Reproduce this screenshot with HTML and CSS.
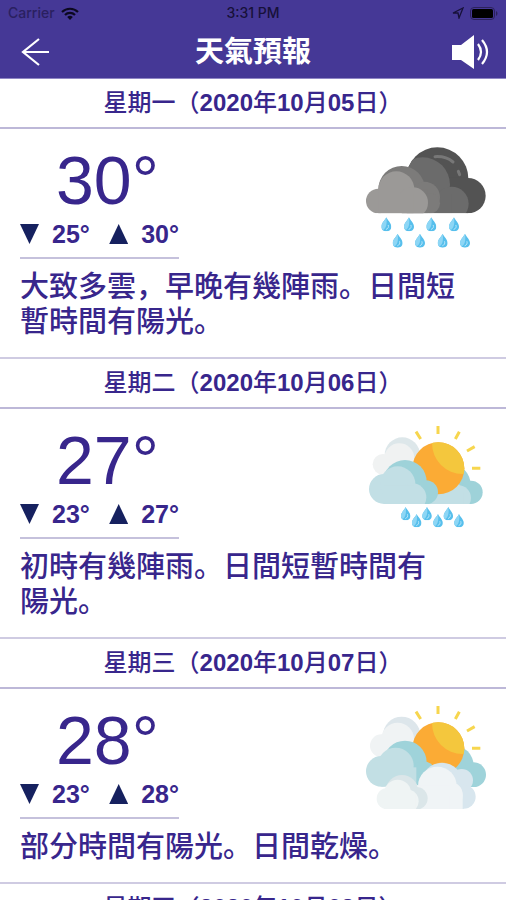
FILE: index.html
```
<!doctype html>
<html lang="zh">
<head>
  <meta charset="utf-8">
  <title>天氣預報</title>
  <meta name="viewport" content="width=device-width, initial-scale=1">
  <link rel="stylesheet" href="styles.css">
</head>
<body>
  <!-- shared shapes -->
  <svg class="defs" aria-hidden="true">
    <defs>
      <symbol id="drop" viewBox="0 0 30 42">
        <path d="M15 0C18 8 30 17 30 28C30 37 23 42 15 42S0 37 0 28C0 17 12 8 15 0Z" fill="#57bfec"/>
        <path d="M15 0C17 13 17 30 6 38C2 35 0 32 0 28C0 17 12 8 15 0Z" fill="#8dd6f5"/>
        <path d="M21 24C23 30 20 34 15 36" fill="none" stroke="#b9e7fa" stroke-width="3" stroke-linecap="round"/>
      </symbol>
      <clipPath id="base"><rect x="40" y="30" width="380" height="208"/></clipPath>
      <clipPath id="base2"><rect x="40" y="30" width="380" height="240"/></clipPath>
      <clipPath id="base3"><rect x="40" y="30" width="380" height="315"/></clipPath>
      <clipPath id="darkcloud">
        <circle cx="262" cy="133" r="93"/><circle cx="354" cy="185" r="53"/><rect x="170" y="130" width="184" height="108"/>
      </clipPath>
      <clipPath id="sunclip"><circle cx="265" cy="163" r="78"/></clipPath>
      <g id="rays" stroke="#f7d64e" stroke-width="9" stroke-linecap="butt">
        <path d="M264 34V60M198 53L212 75M328 53L316 75M351 111L374 98M366 163H391"/>
      </g>
      <g id="sun">
        <circle cx="265" cy="163" r="78" fill="#fbab35"/>
        <circle cx="338" cy="88" r="92" fill="#f4c73d" clip-path="url(#sunclip)"/>
      </g>
    </defs>
  </svg>

  <header class="topbar">
    <div class="status">
      <span class="carrier">Carrier
        <svg width="18" height="13" viewBox="0 0 18 13" aria-hidden="true">
          <path d="M1 5A11.5 11.5 0 0 1 17 5M4 8A7 7 0 0 1 14 8" fill="none" stroke="currentColor" stroke-width="2.2"/>
          <path d="M9 13L6.2 10A4 4 0 0 1 11.8 10Z" fill="currentColor"/>
        </svg>
      </span>
      <span>3:31 PM</span>
      <span class="power">
        <svg width="12" height="12" viewBox="0 0 12 12" aria-hidden="true">
          <path d="M1 6L11 1L7 11L6 6Z" fill="none" stroke="currentColor" stroke-width="1.3"/>
        </svg>
        <svg width="28" height="13" viewBox="0 0 28 13" aria-hidden="true">
          <rect x=".5" y=".5" width="24" height="12" rx="3.5" fill="none" stroke="#2c225c"/>
          <rect x="2" y="2" width="21" height="9" rx="1.5" fill="#000"/>
          <path d="M26 4C28 5 28 8 26 9Z" fill="#2c225c"/>
        </svg>
      </span>
    </div>
    <div class="nav">
      <button class="icon-btn" type="button" aria-label="返回">
        <svg width="28" height="28" viewBox="0 0 28 28" aria-hidden="true">
          <path d="M18 1L2 14L18 27M2 14H28" fill="none" stroke="#fff" stroke-width="2.2"/>
        </svg>
      </button>
      <h1>天氣預報</h1>
      <button class="icon-btn" type="button" aria-label="朗讀">
        <svg width="38" height="34" viewBox="0 0 38 34" aria-hidden="true">
          <path d="M0 10H9L22 0V34L9 25H0Z" fill="#fff"/>
          <path d="M26 9Q32 17 26 25M30 5Q40 17 30 29" fill="none" stroke="#fff" stroke-width="2.2"/>
        </svg>
      </button>
    </div>
  </header>

  <main>
    <section class="day">
      <h2>星期一（<b>2020</b>年<b>10</b>月<b>05</b>日）</h2>
      <div class="body">
        <div class="summary">
          <div class="temps">
            <div class="now">30°</div>
            <div class="range"><span class="low">25°</span><span class="high">30°</span></div>
          </div>
          <svg class="weather" viewBox="48 36 360 312" role="img" aria-label="有雨">
            <g clip-path="url(#base)">
              <g fill="#535353">
                <circle cx="262" cy="133" r="93"/><circle cx="354" cy="185" r="53"/><rect x="170" y="130" width="184" height="108"/>
              </g>
              <g fill="#6b6b6b" clip-path="url(#darkcloud)">
                <circle cx="218" cy="152" r="82"/><circle cx="305" cy="209" r="51"/><rect x="170" y="180" width="135" height="60"/>
              </g>
              <path d="M255 68Q288 66 309 84M325 112L329 122" fill="none" stroke="#777" stroke-width="9" stroke-linecap="round"/>
              <g fill="#7c7b7a">
                <circle cx="155" cy="166" r="70"/><circle cx="223" cy="190" r="47"/><rect x="85" y="166" width="148" height="72"/><circle cx="240" cy="208" r="30"/>
              </g>
              <g fill="#9b9997">
                <circle cx="85" cy="201" r="37"/><circle cx="139" cy="166" r="54"/><circle cx="188" cy="206" r="46"/><rect x="85" y="180" width="105" height="58"/>
              </g>
            </g>
            <use href="#drop" x="94" y="250" width="30" height="42"/><use href="#drop" x="162" y="250" width="30" height="42"/>
            <use href="#drop" x="229" y="250" width="30" height="42"/><use href="#drop" x="297" y="250" width="30" height="42"/>
            <use href="#drop" x="128" y="299" width="30" height="42"/><use href="#drop" x="195" y="299" width="30" height="42"/>
            <use href="#drop" x="263" y="299" width="30" height="42"/><use href="#drop" x="330" y="299" width="30" height="42"/>
          </svg>
        </div>
        <p>大致多雲，早晚有幾陣雨。日間短<br>暫時間有陽光。</p>
      </div>
    </section>

    <section class="day">
      <h2>星期二（<b>2020</b>年<b>10</b>月<b>06</b>日）</h2>
      <div class="body">
        <div class="summary">
          <div class="temps">
            <div class="now">27°</div>
            <div class="range"><span class="low">23°</span><span class="high">27°</span></div>
          </div>
          <svg class="weather" viewBox="48 36 360 312" role="img" aria-label="間有陽光有雨">
            <use href="#rays"/>
            <circle cx="157" cy="123" r="53" fill="#dde7ea"/>
            <g fill="#f0f2f2">
              <circle cx="99" cy="151" r="31"/><circle cx="148" cy="133" r="45"/><rect x="99" y="130" width="90" height="52"/>
            </g>
            <g clip-path="url(#base2)">
              <g fill="#9ed2d9">
                <circle cx="300" cy="212" r="62"/><circle cx="363" cy="235" r="35"/><rect x="230" y="220" width="133" height="50"/>
              </g>
              <g fill="#c2dfe5">
                <circle cx="290" cy="238" r="46"/><circle cx="325" cy="252" r="38"/><rect x="230" y="235" width="110" height="35"/>
              </g>
            </g>
            <use href="#sun"/>
            <g clip-path="url(#base2)">
              <g fill="#9ed2d9">
                <circle cx="165" cy="203" r="65"/><circle cx="228" cy="235" r="36"/><rect x="140" y="210" width="88" height="60"/>
              </g>
              <g fill="#c2dfe5">
                <circle cx="102" cy="225" r="45"/><circle cx="143" cy="210" r="53"/><circle cx="187" cy="250" r="42"/><rect x="102" y="215" width="90" height="55"/>
              </g>
            </g>
            <use href="#drop" x="152" y="279" width="30" height="40"/><use href="#drop" x="216" y="279" width="30" height="40"/>
            <use href="#drop" x="280" y="279" width="30" height="40"/><use href="#drop" x="185" y="300" width="30" height="40"/>
            <use href="#drop" x="249" y="300" width="30" height="40"/><use href="#drop" x="312" y="300" width="30" height="40"/>
          </svg>
        </div>
        <p>初時有幾陣雨。日間短暫時間有<br>陽光。</p>
      </div>
    </section>

    <section class="day">
      <h2>星期三（<b>2020</b>年<b>10</b>月<b>07</b>日）</h2>
      <div class="body">
        <div class="summary">
          <div class="temps">
            <div class="now">28°</div>
            <div class="range"><span class="low">23°</span><span class="high">28°</span></div>
          </div>
          <svg class="weather" viewBox="48 36 360 312" role="img" aria-label="部分時間有陽光">
            <use href="#rays"/>
            <circle cx="155" cy="124" r="56" fill="#dde6eb"/>
            <g fill="#f0f3f4">
              <circle cx="94" cy="155" r="34"/><circle cx="143" cy="135" r="49"/><rect x="94" y="135" width="90" height="54"/>
            </g>
            <g fill="#9fd3da">
              <circle cx="310" cy="215" r="61"/><circle cx="371" cy="242" r="37"/><rect x="300" y="225" width="71" height="54"/>
            </g>
            <use href="#sun"/>
            <g fill="#9fd3da">
              <circle cx="165" cy="205" r="65"/><circle cx="220" cy="240" r="38"/>
            </g>
            <g fill="#c2dfe4">
              <circle cx="94" cy="232" r="46"/><circle cx="137" cy="215" r="54"/><rect x="94" y="220" width="105" height="58"/>
            </g>
            <g clip-path="url(#base3)">
              <g fill="#d8e6ee">
                <circle cx="276" cy="268" r="62"/><circle cx="335" cy="259" r="34"/><circle cx="341" cy="308" r="36"/><rect x="276" y="280" width="65" height="65"/>
              </g>
              <g fill="#f0f4f6">
                <circle cx="262" cy="276" r="58"/><circle cx="298" cy="304" r="40"/><rect x="205" y="275" width="110" height="70"/><path d="M298 264Q338 268 338 304V345H298Z"/>
              </g>
              <g fill="#dbe6e9">
                <circle cx="156" cy="292" r="49"/><circle cx="199" cy="313" r="34"/><rect x="150" y="300" width="49" height="45"/>
              </g>
              <g fill="#eff4f4">
                <circle cx="112" cy="314" r="32"/><circle cx="143" cy="297" r="40"/><circle cx="170" cy="322" r="36"/><rect x="112" y="300" width="84" height="45"/>
              </g>
            </g>
          </svg>
        </div>
        <p>部分時間有陽光。日間乾燥。</p>
      </div>
    </section>

    <section class="day">
      <h2>星期四（<b>2020</b>年<b>10</b>月<b>08</b>日）</h2>
    </section>
  </main>
</body>
</html>
```

FILE: styles.css
```
* {
  box-sizing: border-box;
}

html,
body {
  height: 100%;
}

body {
  margin: 0;
  display: flex;
  flex-direction: column;
  overflow: hidden;
  background: #fff;
  color: #38268c;
  font-family: "Liberation Sans", "Noto Sans CJK SC", sans-serif;
}

.defs {
  position: absolute;
  width: 0;
  height: 0;
}

/* top bar */
.topbar {
  flex: none;
  background: #453896;
  border-bottom: 1px solid #8f86c4;
}

.status {
  display: grid;
  grid-template-columns: 1fr auto 1fr;
  align-items: center;
  height: 26px;
  padding: 0 8px;
  color: #171139;
  font: 500 14px/26px Inter, sans-serif;
}

.carrier,
.power {
  display: flex;
  align-items: center;
  gap: 6px;
}

.carrier {
  color: #2a2060;
}

.carrier svg {
  color: #0c0820;
}

.power {
  justify-content: flex-end;
}

.nav {
  display: flex;
  align-items: center;
  justify-content: space-between;
  height: 52px;
  padding: 0 16px;
}

.icon-btn {
  display: flex;
  align-items: center;
  justify-content: center;
  width: 38px;
  height: 38px;
  padding: 0;
  border: 0;
  background: none;
  cursor: pointer;
}

h1 {
  margin: 0;
  color: #fff;
  font-size: 29px;
  font-weight: 700;
  line-height: 40px;
}

/* forecast list */
main {
  flex: 1;
  min-height: 0;
  overflow: hidden;
}

.day {
  border-bottom: 2px solid #cfcbe2;
}

h2 {
  margin: 0;
  border-bottom: 2px solid #bdb8d8;
  font-size: 24px;
  font-weight: 500;
  line-height: 48px;
  text-align: center;
}

h2 b {
  font-weight: 700;
}

.body {
  padding: 17px 20px;
}

.summary {
  display: flex;
  justify-content: space-between;
  align-items: flex-start;
}

.temps {
  width: 159px;
  border-bottom: 2px solid #c5c1dc;
  padding-bottom: 3px;
}

.now {
  padding-left: 36px;
  font-size: 68px;
  line-height: 68px;
}

.range {
  display: flex;
  justify-content: space-between;
  font-size: 25px;
  font-weight: 700;
  line-height: 40px;
}

.low,
.high {
  display: flex;
  align-items: center;
  gap: 13px;
}

.low::before,
.high::before {
  content: "";
  width: 19px;
  height: 20px;
  background: #16215f;
}

.low::before {
  clip-path: polygon(0 0, 100% 0, 50% 100%);
}

.high::before {
  clip-path: polygon(50% 0, 100% 100%, 0 100%);
}

.weather {
  width: 120px;
  height: 104px;
}

p {
  margin: 11px 0 0;
  font-size: 29px;
  font-weight: 500;
  line-height: 35px;
}
```
